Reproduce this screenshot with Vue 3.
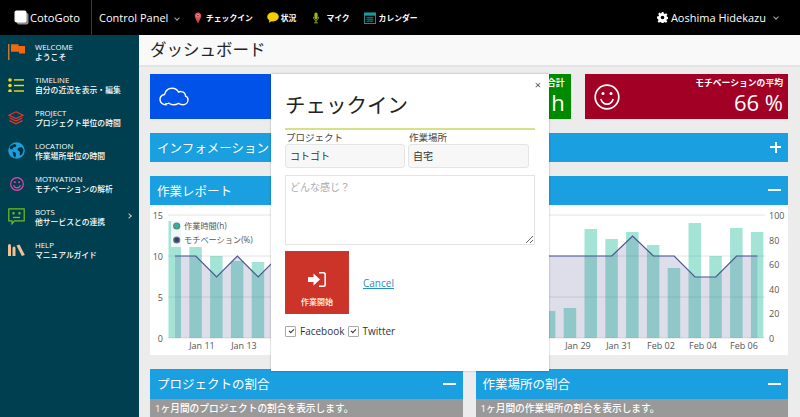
<script setup>
import { computed } from 'vue'

const menu = [
  { key: 'flag', en: 'WELCOME', ja: 'ようこそ' },
  { key: 'list', en: 'TIMELINE', ja: '自分の近況を表示・編集' },
  { key: 'layers', en: 'PROJECT', ja: 'プロジェクト単位の時間' },
  { key: 'globe', en: 'LOCATION', ja: '作業場所単位の時間' },
  { key: 'smile', en: 'MOTIVATION', ja: 'モチベーションの解析' },
  { key: 'chat', en: 'BOTS', ja: '他サービスとの連携', more: true },
  { key: 'books', en: 'HELP', ja: 'マニュアルガイド' }
]

// chart coordinates are page pixels, the svg viewBox starts at the panel corner
const baseY = 338
const barTops = [221, 247, 256, 261, 262, 256, 264, 272, 280, 289, 272, 264, 256, 272, 280, 289, 297, 289, 311, 308, 229, 239, 232, 245, 268, 223, 256, 228, 232]
const lineYs = [256, 256, 277, 256, 277, 256, 256, 277, 256, 256, 277, 256, 256, 256, 277, 256, 256, 256, 256, 256, 256, 256, 236, 256, 256, 277, 277, 256, 256]

const xAt = i => 175 + i * 20.8

const bars = computed(() => barTops.map((top, i) => ({ x: xAt(i) - 6.5, y: top, h: baseY - top })))
const linePoints = computed(() => lineYs.map((y, i) => `${xAt(i).toFixed(1)},${y}`).join(' '))
const areaPoints = computed(() => `175,${baseY} ${linePoints.value} ${xAt(28).toFixed(1)},${baseY}`)

const leftTicks = [{ y: 215, t: '15' }, { y: 256, t: '10' }, { y: 297, t: '5' }, { y: 338, t: '0' }]
const rightTicks = [
  { y: 215.6, t: '100' }, { y: 240, t: '80' }, { y: 264.6, t: '60' },
  { y: 289, t: '40' }, { y: 313.6, t: '20' }, { y: 338, t: '0' }
]
const dates = [
  { x: 202, t: 'Jan 11' }, { x: 244, t: 'Jan 13' }, { x: 578, t: 'Jan 29' }, { x: 619, t: 'Jan 31' },
  { x: 661, t: 'Feb 02' }, { x: 703, t: 'Feb 04' }, { x: 744, t: 'Feb 06' }
]
</script>

<template>
  <div class="page">
    <header class="topbar">
      <div class="brand">
        <svg class="brand-icon" width="15" height="15" viewBox="0 0 15 15">
          <rect x="3" y="3" width="11.5" height="11.5" rx="2" fill="#8d8d8d" />
          <rect x=".5" y=".5" width="12" height="12" rx="2" fill="#fff" />
        </svg>
        <span>CotoGoto</span>
      </div>
      <div class="panel-menu">Control Panel <i class="chev"></i></div>
      <nav class="topnav">
        <a class="nav-check">
          <svg width="8" height="12" viewBox="0 0 9 15">
            <path d="M4.5.5C2 .5.4 2.4.4 4.6c0 3 3 6.5 4.100 9.900C5.600 11.100 8.600 7.600 8.600 4.600 8.600 2.400 7 .5 4.500.5z" fill="#e4474c" />
            <circle cx="4.5" cy="4.6" r="2" fill="#f3b5b5" />
            <circle cx="4.5" cy="4.6" r="1.1" fill="#7a1a20" />
          </svg>
          チェックイン
        </a>
        <a class="nav-status">
          <svg width="12" height="11" viewBox="0 0 12 11">
            <ellipse cx="6" cy="4.8" rx="5.8" ry="4.6" fill="#f5d000" />
            <path d="M2.500 7.500L1.800 10.700 5.500 8.800z" fill="#f5d000" />
          </svg>
          状況
        </a>
        <a class="nav-mic">
          <svg width="8" height="12" viewBox="0 0 8 15">
            <rect x="2" y=".5" width="4" height="8.5" rx="2" fill="#9dbb1f" />
            <path d="M.7 6c0 2.500 1.300 4.300 3.300 4.300S7.300 8.500 7.300 6" fill="none" stroke="#9dbb1f" />
            <path d="M4 10v3M1.800 13.500h4.400" stroke="#9dbb1f" stroke-width="1.2" />
          </svg>
          マイク
        </a>
        <a class="nav-cal">
          <svg width="12" height="12" viewBox="0 0 13 13">
            <rect x=".5" y="1" width="12" height="11.5" fill="none" stroke="#1b9a9a" />
            <rect x=".5" y="1" width="12" height="3" fill="#1b9a9a" />
            <path d="M2.500 6h8M2.500 8h8M2.500 10h8M4.500 5v6M6.500 5v6M8.500 5v6" stroke="#1b7f86" stroke-width=".8" />
          </svg>
          カレンダー
        </a>
      </nav>
      <div class="user">
        <svg width="11" height="11" viewBox="0 0 24 24">
          <path fill="#fff" fill-rule="evenodd" d="M10 0h4l.7 3.400 2.300 1 2.900-1.900 2.800 2.800-1.900 2.900 1 2.300 3.200.5v4l-3.400.7-1 2.300 1.900 2.900-2.800 2.800-2.900-1.900-2.300 1-.5 3.200h-4l-.7-3.400-2.300-1-2.900 1.900-2.800-2.800 1.900-2.900-1-2.300L0 14v-4l3.400-.7 1-2.300-1.900-2.900 2.800-2.800 2.900 1.900 2.300-1zM12 8a4 4 0 1 0 0 8 4 4 0 0 0 0-8z" />
        </svg>
        <span>Aoshima Hidekazu</span>
        <i class="chev"></i>
      </div>
    </header>

    <div class="body">
      <aside class="sidebar">
        <div v-for="item in menu" :key="item.en" class="menu-item">
          <span class="menu-icon">
            <svg v-if="item.key === 'flag'" width="17" height="16" viewBox="0 0 17 16">
              <rect x="0" y="0" width="1.5" height="16" fill="#c8772f" />
              <path d="M3 .3h7.500v1.700H17v7.500h-6V7.800H3z" fill="#f0680f" />
            </svg>
            <svg v-else-if="item.key === 'list'" width="16" height="14" viewBox="0 0 16 14">
              <g fill="#f7dc14">
                <circle cx="2" cy="2" r="1.8" /><circle cx="2" cy="7.5" r="1.8" /><circle cx="2" cy="13" r="1.8" />
                <rect x="6" y="1.2" width="10" height="1.4" /><rect x="6" y="6.800" width="10" height="1.4" /><rect x="6" y="12.300" width="10" height="1.4" />
              </g>
            </svg>
            <svg v-else-if="item.key === 'layers'" width="16" height="14" viewBox="0 0 16 14">
              <g fill="none" stroke="#e5342e" stroke-width="1.2">
                <path d="M8 .8L15 4.200 8 7.600 1 4.200z" />
                <path d="M1.500 6.800L8 10l6.500-3.200" />
                <path d="M1.500 9.600L8 12.900l6.500-3.300" />
              </g>
            </svg>
            <svg v-else-if="item.key === 'globe'" width="17" height="17" viewBox="0 0 17 17">
              <circle cx="8.5" cy="8.5" r="8.3" fill="#1a9fe0" />
              <path d="M3 3.500l3.500-1.500 2 1-1 2-2.500.5-.5 2-2-.5-1-1.500zM10 6l3.500-1 2 2.500-.5 3-2 3-1.500-1 .5-2.500-2.500-2zM4.500 9.500l3 1 .5 3-1 2-1.500-1.500z" fill="#01303f" />
            </svg>
            <svg v-else-if="item.key === 'smile'" class="smile-icon" width="14" height="14" viewBox="0 0 15 15">
              <g fill="none" stroke="#e847b2" stroke-width="1.2">
                <circle cx="7.5" cy="7.5" r="6.8" />
                <path d="M3.800 8.800c.8 2 2.200 2.900 3.700 2.900s2.900-.9 3.700-2.900" />
              </g>
              <circle cx="5.2" cy="5.5" r="1" fill="#e847b2" /><circle cx="9.8" cy="5.5" r="1" fill="#e847b2" />
            </svg>
            <svg v-else-if="item.key === 'chat'" width="17" height="17" viewBox="0 0 17 17">
              <path d="M.8.8h15.400v12H6.500L4 15.800v-3H.8z" fill="none" stroke="#74bd22" stroke-width="1.2" />
              <rect x="4.5" y="4" width="2" height="2.5" fill="#74bd22" /><rect x="10.5" y="4" width="2" height="2.5" fill="#74bd22" />
              <rect x="5" y="8.800" width="7" height="1.3" fill="#74bd22" />
            </svg>
            <svg v-else width="17" height="12" viewBox="0 0 17 12">
              <g fill="#f0c090">
                <path d="M0 1.500a1.500 1.500 0 0 1 3 0V12H0z" /><path d="M4.500 4a1.500 1.500 0 0 1 3 0v8h-3z" />
                <path d="M8.500 1.500l3-1L16.800 11l-3 1z" />
              </g>
            </svg>
          </span>
          <span class="menu-text">
            <b>{{ item.en }}</b>
            <b>{{ item.ja }}</b>
          </span>
          <i v-if="item.more" class="menu-more"></i>
        </div>
      </aside>

      <main class="main">
        <div class="title-bar">ダッシュボード</div>
        <div class="content">
          <div class="cards">
            <div class="card card-blue">
              <svg width="30" height="19" viewBox="0 0 30 19">
                <path d="M7 17.800C3.500 17.800 1 15.500 1 12.500 1 9.800 3 8 5.500 7.500 6.500 3.500 9.500 1.200 13 1.200c3 0 5.300 1.500 6.500 3.800 1-.5 2-.6 3-.4 2.500.4 4 2.300 4.100 4.600 1.600.6 2.400 1.900 2.400 3.600 0 2.800-2.200 5-5 5-2 0-3.300-.6-4.500-1.500-1.600 1-3.200 1.500-5 1.500-1.700 0-3.300-.6-4.500-1.600-1 .4-2 .6-3 .6z" fill="none" stroke="#fff" stroke-width="1.4" />
              </svg>
            </div>
            <div class="card card-green">
              <div class="card-label">合計</div>
              <div class="card-value">h</div>
            </div>
            <div class="card card-red">
              <svg class="card-smile" width="26" height="26" viewBox="0 0 26 26">
                <g fill="none" stroke="#fff" stroke-width="1.7">
                  <circle cx="13" cy="13" r="11.8" />
                  <path d="M6.800 15c1.200 3.500 3.500 5.200 6.200 5.200s5-1.700 6.200-5.200" />
                </g>
                <circle cx="9" cy="9.5" r="1.5" fill="#fff" /><circle cx="17" cy="9.5" r="1.5" fill="#fff" />
              </svg>
              <div class="card-right">
                <div class="card-label">モチベーションの平均</div>
                <div class="card-value">66 %</div>
              </div>
            </div>
          </div>

          <section class="panel">
            <div class="panel-head"><span>インフォメーション</span><i class="plus"></i></div>
          </section>

          <section class="panel">
            <div class="panel-head"><span>作業レポート</span><i class="minus"></i></div>
            <div class="chart-body">
              <svg width="638" height="150" viewBox="150 205 638 150">
                <line v-for="t in leftTicks" :key="t.t" x1="168" x2="765" :y1="t.y" :y2="t.y" stroke="#e4e4e4" />
                <rect v-for="(b, i) in bars" :key="i" :x="b.x" :y="b.y" width="12.5" :height="b.h" fill="#1abc9c" fill-opacity=".4" />
                <polygon :points="areaPoints" fill="#343e82" fill-opacity=".17" />
                <polyline :points="linePoints" fill="none" stroke="#4d5590" stroke-width="1.2" />
                <text v-for="t in leftTicks" :key="'l' + t.t" x="163" :y="t.y + 3.5" text-anchor="end" class="tick">{{ t.t }}</text>
                <text v-for="t in rightTicks" :key="'r' + t.t" x="769" :y="t.y + 3.5" class="tick">{{ t.t }}</text>
                <text v-for="d in dates" :key="d.t" :x="d.x" y="349" text-anchor="middle" class="tick">{{ d.t }}</text>
                <rect x="171" y="218" width="85" height="29" fill="#fff" fill-opacity=".8" />
                <circle cx="176.7" cy="226" r="3" fill="#1abc9c" stroke="#777" stroke-width="1.2" />
                <circle cx="176.7" cy="240" r="3" fill="#343e82" stroke="#777" stroke-width="1.2" />
                <text x="184" y="229" class="legend">作業時間(h)</text>
                <text x="184" y="243" class="legend">モチベーション(%)</text>
              </svg>
            </div>
          </section>

          <div class="split">
            <section class="panel">
              <div class="panel-head"><span>プロジェクトの割合</span><i class="minus"></i></div>
              <div class="panel-note">1ヶ月間のプロジェクトの割合を表示します。</div>
            </section>
            <section class="panel">
              <div class="panel-head"><span>作業場所の割合</span><i class="minus"></i></div>
              <div class="panel-note">1ヶ月間の作業場所の割合を表示します。</div>
            </section>
          </div>
        </div>
      </main>
    </div>

    <div class="modal">
      <span class="close">×</span>
      <h1>チェックイン</h1>
      <div class="fields">
        <label class="field field-a">
          <span>プロジェクト</span>
          <div class="select">コトゴト</div>
        </label>
        <label class="field field-b">
          <span>作業場所</span>
          <div class="select">自宅</div>
        </label>
      </div>
      <textarea class="memo" placeholder="どんな感じ？"></textarea>
      <div class="actions">
        <button class="start">
          <svg width="18" height="15" viewBox="0 0 18 15">
            <path d="M0 5h5.500V1.500L12 7.500l-6.500 6V10H0z" fill="#fff" />
            <path d="M11 .8h4.500c1 0 1.700.7 1.700 1.700v10c0 1-.7 1.700-1.700 1.700H11" fill="none" stroke="#fff" stroke-width="1.6" />
          </svg>
          <span>作業開始</span>
        </button>
        <a class="cancel">Cancel</a>
      </div>
      <div class="shares">
        <span class="check"><i class="box"></i>Facebook</span>
        <span class="check"><i class="box"></i>Twitter</span>
      </div>
    </div>
  </div>
</template>

<style scoped>
.page {
  position: relative;
  width: 800px;
  height: 417px;
  overflow: hidden;
  font-family: "Open Sans", "Noto Sans CJK JP", sans-serif;
  background: #ececec;
  color: #333;
}

.topbar {
  display: flex;
  align-items: center;
  height: 35px;
  background: #000;
  color: #fff;
}

.brand {
  display: flex;
  align-items: center;
  gap: 1px;
  width: 92px;
  height: 35px;
  padding-left: 14px;
  box-sizing: border-box;
  border-right: 1px solid #3a3a3a;
  font-size: 11.2px;
}

.panel-menu {
  margin-left: 7px;
  width: 95px;
  font-size: 11px;
  white-space: nowrap;
}

.chev {
  display: inline-block;
  width: 3px;
  height: 3px;
  margin: 0 0 2px 4px;
  border-right: 1px solid #aaa;
  border-bottom: 1px solid #aaa;
  transform: rotate(45deg);
}

.topnav {
  display: flex;
  align-items: center;
  font-size: 7.8px;
  font-weight: 700;
}

.topnav a {
  display: flex;
  align-items: center;
  gap: 4px;
  white-space: nowrap;
}

.topnav .nav-status { margin-left: 14px; gap: 2px; }
.topnav .nav-mic { margin-left: 16px; gap: 6px; }
.topnav .nav-cal { margin-left: 14px; gap: 3px; }

.user {
  display: flex;
  align-items: center;
  gap: 3px;
  margin-left: auto;
  margin-right: 22px;
  font-size: 11px;
}

.user .chev { margin-left: 5px; }

.body {
  display: flex;
  height: 382px;
}

.sidebar {
  width: 139px;
  flex: none;
  background: #003f4f;
  color: #fff;
}

.menu-item {
  display: flex;
  align-items: center;
  height: 33px;
  box-sizing: border-box;
  padding-left: 8px;
  position: relative;
}

.menu-icon {
  display: flex;
  width: 27px;
  flex: none;
}

.smile-icon { margin-left: 2px; }

.menu-text {
  display: flex;
  flex-direction: column;
  font-size: 7.8px;
  line-height: 10px;
  white-space: nowrap;
}

.menu-text b { font-weight: 500; }

.menu-more {
  position: absolute;
  right: 8px;
  top: 14px;
  width: 3px;
  height: 3px;
  border-top: 1px solid #ccc;
  border-right: 1px solid #ccc;
  transform: rotate(45deg);
}

.main {
  flex: 1;
  min-width: 0;
}

.title-bar {
  height: 32px;
  box-sizing: border-box;
  padding-left: 11px;
  line-height: 30px;
  font-size: 16.5px;
  color: #222;
  background: #f9f9f9;
  border-bottom: 2px solid #e4e4e4;
}

.content {
  display: flex;
  flex-direction: column;
  gap: 14px;
  padding: 7px 12px 0 11px;
}

.cards {
  display: grid;
  grid-template-columns: repeat(3, 1fr);
  gap: 14px;
}

.card {
  height: 45px;
  box-sizing: border-box;
  color: #fff;
  display: flex;
  align-items: center;
  overflow: hidden;
}

.card-blue { background: #0052e8; padding-left: 9px; }
.card-green { background: #008a00; flex-direction: column; align-items: flex-end; justify-content: center; padding-right: 6px; }
.card-red { background: #a30026; padding: 0 5px 0 9px; justify-content: space-between; }

.card-right {
  display: flex;
  flex-direction: column;
  align-items: flex-end;
}

.card-label {
  font-size: 8.8px;
  line-height: 12px;
  font-weight: 700;
  white-space: nowrap;
}

.card-value {
  font-size: 22px;
  line-height: 27px;
  white-space: nowrap;
}

.panel {
  background: #fff;
}

.panel-head {
  display: flex;
  align-items: center;
  justify-content: space-between;
  height: 29px;
  padding: 0 7px 1px;
  box-sizing: border-box;
  background: #1a9fe0;
  color: #fff;
  font-size: 12.5px;
  white-space: nowrap;
}

.split .panel-head { height: 30px; }

.plus, .minus {
  position: relative;
  display: block;
  height: 11px;
}

.plus { width: 11px; }
.minus { width: 13px; }

.plus::before, .minus::before {
  content: "";
  position: absolute;
  left: 0;
  top: 4.5px;
  width: 100%;
  height: 2px;
  background: #fff;
}

.plus::after {
  content: "";
  position: absolute;
  top: 0;
  left: 4.5px;
  width: 2px;
  height: 11px;
  background: #fff;
}

.chart-body {
  height: 150px;
}

.chart-body svg { display: block; }

.tick {
  font-size: 9px;
  fill: #555;
}

.legend {
  font-size: 8.2px;
  fill: #555;
}

.split {
  display: grid;
  grid-template-columns: 1fr 1fr;
  gap: 13px;
}

.panel-note {
  height: 18px;
  padding-left: 5px;
  line-height: 19px;
  background: #999;
  color: #fff;
  font-size: 9.7px;
  font-weight: 500;
  white-space: nowrap;
  overflow: hidden;
}

.modal {
  position: absolute;
  left: 271px;
  top: 74px;
  width: 278px;
  height: 297px;
  box-sizing: border-box;
  padding: 0 14px;
  background: #fff;
  box-shadow: 0 0 2px rgba(0, 0, 0, .3);
}

.close {
  position: absolute;
  right: 8px;
  top: 3px;
  font-size: 11px;
  color: #555;
}

.modal h1 {
  margin: 0;
  height: 56px;
  box-sizing: border-box;
  padding-top: 17px;
  line-height: 28px;
  font-size: 20.5px;
  font-weight: 400;
  color: #222;
  border-bottom: 2px solid #d6e285;
}

.fields {
  display: flex;
  gap: 3px;
}

.field {
  display: flex;
  flex-direction: column;
  font-size: 9.5px;
}

.field span {
  height: 14px;
  line-height: 15px;
  padding-left: 1px;
  color: #444;
}

.field-a { width: 120px; }
.field-b { width: 121px; }

.select {
  height: 24px;
  box-sizing: border-box;
  padding-left: 4px;
  line-height: 22px;
  background: #f7f7f7;
  border: 1px solid #e4e4e4;
  border-radius: 3px;
  font-size: 10px;
}

.memo {
  display: block;
  width: 250px;
  height: 70px;
  margin-top: 7px;
  padding: 3px 4px;
  box-sizing: border-box;
  border: 1px solid #e4e4e4;
  font-family: inherit;
  font-size: 10px;
  outline: none;
}

.memo::placeholder { color: #aaa; }

.actions {
  display: flex;
  align-items: center;
  gap: 14px;
  margin-top: 6px;
}

.start {
  display: flex;
  flex-direction: column;
  align-items: center;
  width: 64px;
  height: 63px;
  padding: 20px 0 0;
  box-sizing: border-box;
  border: 1px solid #c43a30;
  background: #cc3329;
  color: #fff;
  font-family: inherit;
  font-size: 8px;
  font-weight: 500;
}

.start span { margin-top: 9px; }

.cancel {
  color: #2a8cc4;
  font-size: 10px;
  text-decoration: underline;
}

.shares {
  display: flex;
  gap: 3px;
  margin-top: 10px;
  font-size: 10px;
}

.check {
  display: flex;
  align-items: center;
  gap: 4px;
  color: #333;
}

.box {
  position: relative;
  display: block;
  width: 11px;
  height: 11px;
  border: 1px solid #aaa;
  border-radius: 1px;
  box-sizing: border-box;
}

.box::after {
  content: "";
  position: absolute;
  left: 2.5px;
  top: 2px;
  width: 4px;
  height: 2px;
  border-left: 1px solid #333;
  border-bottom: 1px solid #333;
  transform: rotate(-45deg);
}
</style>

<style>
html, body { margin: 0; overflow: hidden; }
</style>
